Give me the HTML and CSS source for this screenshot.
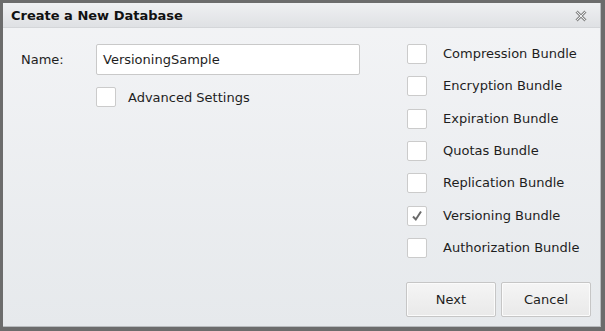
FILE: index.html
```html
<!DOCTYPE html>
<html>
<head>
<meta charset="utf-8">
<link rel="stylesheet" href="styles.css">
</head>
<body>
<div class="dialog">
  <div class="titlebar">
    <span class="title">Create a New Database</span>
    <svg class="close" width="12" height="12" viewBox="0 0 12 12">
      <path d="M1.5 1.5 L10.5 10.5 M10.5 1.5 L1.5 10.5" stroke="#8c8c8c" stroke-width="3" fill="none"/>
      <path d="M1.5 1.5 L10.5 10.5 M10.5 1.5 L1.5 10.5" stroke="#eceef0" stroke-width="1" fill="none"/>
    </svg>
  </div>
  <div class="content">
    <div class="left">
      <div class="name-row">
        <label class="name-label">Name:</label>
        <div class="input">VersioningSample</div>
      </div>
      <div class="adv-row">
        <span class="box"></span>
        <span class="label">Advanced Settings</span>
      </div>
    </div>
    <div class="right">
      <div class="row"><span class="box"></span><span class="label">Compression Bundle</span></div>
      <div class="row"><span class="box"></span><span class="label">Encryption Bundle</span></div>
      <div class="row"><span class="box"></span><span class="label">Expiration Bundle</span></div>
      <div class="row"><span class="box"></span><span class="label">Quotas Bundle</span></div>
      <div class="row"><span class="box"></span><span class="label">Replication Bundle</span></div>
      <div class="row"><span class="box checked"><svg width="12" height="12" viewBox="0 0 12 12"><path d="M2 6.5 L4.8 9.5 L10 1.5" stroke="#6a6a6a" stroke-width="2" fill="none"/></svg></span><span class="label">Versioning Bundle</span></div>
      <div class="row"><span class="box"></span><span class="label">Authorization Bundle</span></div>
    </div>
  </div>
  <div class="footer">
    <button class="btn">Next</button>
    <button class="btn">Cancel</button>
  </div>
</div>
</body>
</html>
```

FILE: styles.css
```css
html, body {
  margin: 0;
  padding: 0;
}
body {
  width: 605px;
  height: 331px;
  background: #6c6c6c;
  padding: 3px 4px 4px 3px;
  box-sizing: border-box;
  font-family: "DejaVu Sans", Verdana, sans-serif;
  font-size: 13px;
  color: #1e1e1e;
}
.dialog {
  width: 598px;
  height: 324px;
  background: linear-gradient(#f3f4f6, #e6e9ec);
  display: flex;
  flex-direction: column;
  box-sizing: border-box;
  border-bottom: 1px solid #b8bbbe;
  border-right: 1px solid #b8bbbe;
}
.titlebar {
  height: 25px;
  box-sizing: border-box;
  background: linear-gradient(#eff0f2, #dfe1e4);
  border-bottom: 1px solid #d4d6d9;
  display: flex;
  align-items: center;
  justify-content: space-between;
  padding: 0 13px 0 8px;
}
.title {
  font-weight: bold;
  font-size: 13px;
  color: #111;
}
.close {
  display: block;
  margin-top: 1px;
}
.content {
  flex: 1;
  display: flex;
  padding: 16px 0 0 18px;
}
.left {
  width: 386px;
}
.name-row {
  display: flex;
  align-items: center;
  height: 31px;
}
.name-label {
  width: 75px;
}
.input {
  width: 264px;
  height: 31px;
  box-sizing: border-box;
  border: 1px solid #c9c9c9;
  border-radius: 2px;
  background: #fff;
  padding-left: 6px;
  display: flex;
  align-items: center;
}
.adv-row {
  display: flex;
  align-items: center;
  margin-top: 12px;
  margin-left: 75px;
}
.adv-row .label {
  margin-left: 12px;
}
.box {
  width: 20px;
  height: 20px;
  box-sizing: border-box;
  border: 1px solid #cbcbcb;
  border-radius: 2px;
  background: #fff;
  display: flex;
  align-items: center;
  justify-content: center;
  flex: none;
}
.right {
  display: flex;
  flex-direction: column;
}
.row {
  height: 32.33px;
  display: flex;
  align-items: flex-start;
}
.row .label {
  margin-left: 16px;
  line-height: 20px;
}
.footer {
  display: flex;
  justify-content: flex-end;
  gap: 5px;
  padding: 0 9px 9px 0;
}
.btn {
  width: 90px;
  height: 35px;
  box-sizing: border-box;
  border: 1px solid #c6c6c6;
  border-radius: 2px;
  box-shadow: inset 0 0 0 1px #fbfbfb;
  background: linear-gradient(#f5f5f5, #e9e9e9);
  font-family: "DejaVu Sans", Verdana, sans-serif;
  font-size: 13px;
  color: #1e1e1e;
  padding: 0;
}
```
